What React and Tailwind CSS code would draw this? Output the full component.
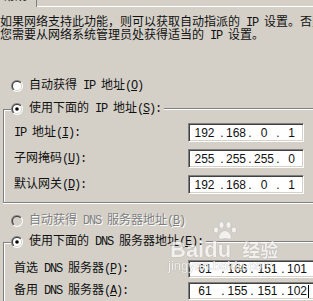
import React from "react";

const FONT = "font-['Liberation_Mono','Noto_Sans_CJK_SC',monospace]";

function Radio({ checked, disabled, id }) {
  return (
    <svg width="12" height="12" viewBox="0 0 12 12" className="shrink-0">
      <defs>
        <linearGradient id={id + "o"} x1="0" y1="0" x2="1" y2="1">
          <stop offset="0.5" stopColor="#808080" />
          <stop offset="0.5" stopColor="#ffffff" />
        </linearGradient>
        <linearGradient id={id + "i"} x1="0" y1="0" x2="1" y2="1">
          <stop offset="0.5" stopColor="#404040" />
          <stop offset="0.5" stopColor="#d4d0c8" />
        </linearGradient>
      </defs>
      <circle cx="6" cy="6" r="6" fill={`url(#${id}o)`} />
      <circle cx="6" cy="6" r="5" fill={`url(#${id}i)`} />
      <circle cx="6" cy="6" r="4" fill={disabled ? "#d4d0c8" : "#ffffff"} />
      {checked && <circle cx="6" cy="6" r="1.8" fill={disabled ? "#808080" : "#000"} />}
    </svg>
  );
}

function U({ children }) {
  return <span className="underline underline-offset-1">{children}</span>;
}

/* half-width latin run, 6px advance like SimSun */
function L({ children }) {
  return <span className="tracking-[-1.2px] whitespace-pre">{children}</span>;
}

function Cells({ values, widths, cursor }) {
  const items = [];
  values.forEach((v, i) => {
    items.push(
      <span key={"v" + i} className="flex justify-center shrink-0" style={{ width: widths[i] }}>
        {v}
      </span>
    );
    if (i < values.length - 1) {
      items.push(
        <span key={"d" + i} className="flex justify-center shrink-0 w-[6px]">
          .
        </span>
      );
    }
  });
  return (
    <div className="flex items-center h-full pl-[1px] font-['Liberation_Sans',Arial,sans-serif] text-[12px] text-[#111]">
      {items}
      {cursor && <span className="w-[1px] h-[13px] bg-black shrink-0" />}
    </div>
  );
}

function Box({ values, widths, w, h, cursor }) {
  return (
    <div
      className={`${w} ${h} shrink-0 bg-white border border-t-[#808080] border-l-[#808080] border-r-white border-b-white shadow-[inset_1px_1px_0_#404040,inset_-1px_-1px_0_#d4d0c8]`}
    >
      <Cells values={values} widths={widths} cursor={cursor} />
    </div>
  );
}

const IPW = [29, 22, 22, 21];
const DNSW = [30, 23, 25, 22];

export default function App() {
  return (
    <div className={`relative w-[313px] h-[301px] overflow-hidden bg-[#d4d0c8] text-[#111] text-[12px] ${FONT}`}>
      {/* tab strip */}
      <div className="flex h-[7px]">
        <div className="w-[37px] h-full border-r border-[#808080] overflow-hidden">
          <div className="-mt-[9px] ml-[3px] leading-[12px] whitespace-nowrap">常规</div>
        </div>
        <div className="flex-1 border-b border-white" />
      </div>

      {/* description */}
      <div className="mt-[10px] leading-[13px] whitespace-nowrap">
        <div>
          如果网络支持此功能，则可以获取自动指派的<L> IP </L>设置。否则，
        </div>
        <div>
          您需要从网络系统管理员处获得适当的<L> IP </L>设置。
        </div>
      </div>

      {/* auto IP */}
      <div className="mt-[32px] h-[22px] flex items-center pl-[11px]">
        <Radio id="r1" />
        <span className="ml-[6px] whitespace-nowrap">
          自动获得<L> IP </L>地址<L>(<U>O</U>)</L>
        </span>
      </div>

      {/* manual IP header */}
      <div className="mt-[1px] h-[22px] flex items-center">
        <div className="w-[3px] shrink-0" />
        <div className="self-end w-[8px] h-[11px] shrink-0 border-l border-t border-[#808080] shadow-[inset_1px_1px_0_#fff]" />
        <Radio id="r2" checked />
        <span className="ml-[6px] whitespace-nowrap">
          使用下面的<L> IP </L>地址<L>(<U>S</U>):</L>
        </span>
        <div className="flex-1 ml-[3px] h-[2px] border-t border-[#808080] bg-white" />
      </div>

      {/* IP body */}
      <div className="ml-[3px] border-l border-[#808080] shadow-[inset_1px_0_0_#fff] pl-[10px] pt-[3px] pb-[8px] flex flex-col gap-[7px]">
        <div className="flex items-center h-[19px]">
          <span className="w-[174px] shrink-0 whitespace-nowrap">
            <L>IP </L>地址<L>(<U>I</U>):</L>
          </span>
          <Box w="w-[116px]" h="h-[19px]" values={["192", "168", "0", "1"]} widths={IPW} />
        </div>
        <div className="flex items-center h-[19px]">
          <span className="w-[174px] shrink-0 whitespace-nowrap">
            子网掩码<L>(<U>U</U>):</L>
          </span>
          <Box w="w-[116px]" h="h-[19px]" values={["255", "255", "255", "0"]} widths={IPW} />
        </div>
        <div className="flex items-center h-[19px]">
          <span className="w-[174px] shrink-0 whitespace-nowrap">
            默认网关<L>(<U>D</U>):</L>
          </span>
          <Box w="w-[116px]" h="h-[19px]" values={["192", "168", "0", "1"]} widths={IPW} />
        </div>
      </div>
      <div className="ml-[3px] h-[2px] border-t border-[#808080] bg-white" />

      {/* auto DNS (disabled) */}
      <div className="mt-[6px] h-[22px] flex items-center pl-[11px]">
        <Radio id="r3" disabled />
        <span className="ml-[6px] whitespace-nowrap text-[#808080] [text-shadow:1px_1px_0_#fff]">
          自动获得<L> DNS </L>服务器地址<L>(<U>B</U>)</L>
        </span>
      </div>

      {/* manual DNS header */}
      <div className="h-[20px] flex items-center">
        <div className="w-[3px] shrink-0" />
        <div className="self-end w-[8px] h-[10px] shrink-0 border-l border-t border-[#808080] shadow-[inset_1px_1px_0_#fff]" />
        <Radio id="r4" checked />
        <span className="ml-[6px] whitespace-nowrap">
          使用下面的<L> DNS </L>服务器地址<L>(<U>E</U>):</L>
        </span>
        <div className="flex-1 ml-[3px] h-[2px] border-t border-[#808080] bg-white" />
      </div>

      {/* DNS body */}
      <div className="ml-[3px] border-l border-[#808080] shadow-[inset_1px_0_0_#fff] pl-[10px] pt-[8px] pb-[8px] flex flex-col gap-[4px]">
        <div className="flex items-center h-[18px]">
          <span className="w-[174px] shrink-0 whitespace-nowrap">
            首选<L> DNS </L>服务器<L>(<U>P</U>):</L>
          </span>
          <Box w="w-[127px]" h="h-[18px]" values={["61", "166", "151", "101"]} widths={DNSW} />
        </div>
        <div className="flex items-center h-[18px]">
          <span className="w-[174px] shrink-0 whitespace-nowrap">
            备用<L> DNS </L>服务器<L>(<U>A</U>):</L>
          </span>
          <Box w="w-[127px]" h="h-[18px]" values={["61", "155", "151", "102"]} widths={DNSW} cursor />
        </div>
      </div>

      {/* watermark */}
      <div className="absolute left-[168px] top-[221px] flex flex-col pointer-events-none opacity-70">
        <svg width="26" height="19" viewBox="0 0 26 19" className="ml-[44px]">
          <g fill="#ffffff" stroke="#b8b8b8" strokeWidth="0.8">
            <ellipse cx="4" cy="9" rx="2.6" ry="3.2" />
            <ellipse cx="9.5" cy="4" rx="2.6" ry="3.4" />
            <ellipse cx="16.5" cy="4" rx="2.6" ry="3.4" />
            <ellipse cx="22" cy="9" rx="2.6" ry="3.2" />
            <path d="M13 9.5c-3 0-6.5 4-6.5 6.5 0 2 2 2.5 3.5 2.2 1.2-0.3 2-0.7 3-0.7s1.8 0.4 3 0.7c1.5 0.3 3.5-0.2 3.5-2.2 0-2.5-3.5-6.5-6.5-6.5z" />
          </g>
        </svg>
        <div className="flex items-end h-[19px] leading-[19px] font-['Liberation_Sans',Arial,sans-serif] font-bold text-white [text-shadow:0_0_1px_#999,0_0_1px_#999]">
          <span className="ml-[2px] text-[22px]">Bai</span>
          <span className="text-[22px]">du</span>
          <span className="ml-[11px] text-[18px] font-['Noto_Sans_CJK_SC',sans-serif]">经验</span>
        </div>
        <div className="text-[13px] leading-[14px] font-['Liberation_Sans',Arial,sans-serif] text-white [text-shadow:0_0_1px_#999,0_0_1px_#999]">
          jingyan.baidu.com
        </div>
      </div>
    </div>
  );
}
